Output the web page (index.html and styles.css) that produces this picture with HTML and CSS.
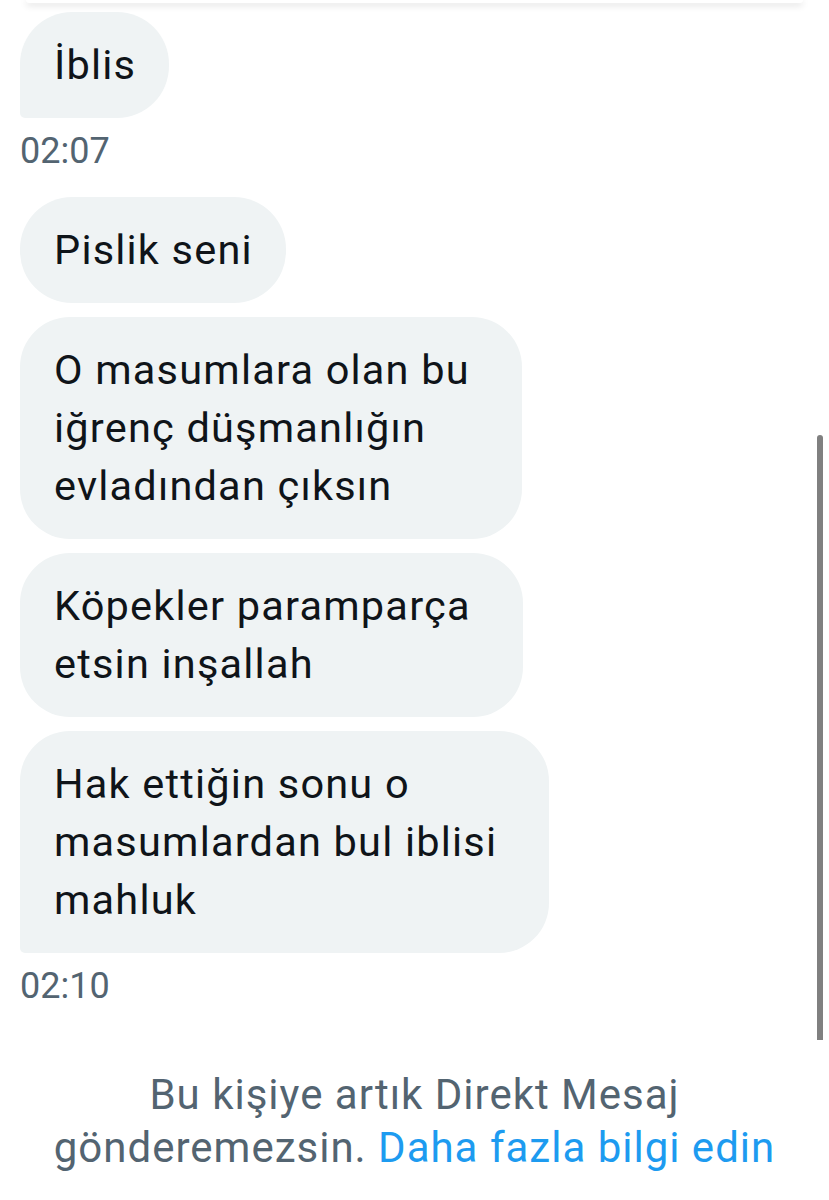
FILE: index.html
```html
<!DOCTYPE html>
<html lang="tr">
<head>
<meta charset="utf-8">
<title>Mesajlar</title>
<link rel="stylesheet" href="styles.css">
</head>
<body>
<div class="topcard"></div>
<main class="thread">
  <div class="bubble tail">İblis</div>
  <div class="time">02:07</div>
  <div class="group">
    <div class="bubble">Pislik seni</div>
    <div class="bubble multi">O masumlara olan bu<br>iğrenç düşmanlığın<br>evladından çıksın</div>
    <div class="bubble multi">Köpekler paramparça<br>etsin inşallah</div>
    <div class="bubble multi tail">Hak ettiğin sonu o<br>masumlardan bul iblisi<br>mahluk</div>
  </div>
  <div class="time">02:10</div>
</main>
<p class="notice">Bu kişiye artık Direkt Mesaj<br>gönderemezsin. <a class="link" href="#">Daha fazla bilgi edin</a></p>
<div class="scrollbar"></div>
</body>
</html>
```
FILE: styles.css
```css
html, body {
  margin: 0;
  padding: 0;
  background: #ffffff;
}
body {
  font-family: Roboto, "Liberation Sans", sans-serif;
  color: #0f1419;
  width: 829px;
  height: 1200px;
  overflow: hidden;
  position: relative;
}
.topcard {
  height: 3px;
  margin: 0 26px 0 26px;
  background: #ffffff;
  border-radius: 0 0 18px 18px;
  box-shadow: 0 2px 7px rgba(0, 0, 0, 0.18);
}
.thread {
  padding: 9px 0 0 20px;
  display: flex;
  flex-direction: column;
  align-items: flex-start;
}
.group {
  display: flex;
  flex-direction: column;
  align-items: flex-start;
  gap: 14px;
  margin-top: 25px;
}
.bubble {
  background: #eff3f4;
  font-size: 41.5px;
  letter-spacing: 1.2px;
  line-height: 58px;
  padding: 24px 33px 24px 34px;
  border-radius: 52px;
}
.bubble.multi {
  padding-right: 52px;
  border-radius: 50px;
}
.bubble.tail {
  border-bottom-left-radius: 5px;
}
.time {
  margin-top: 12px;
  font-size: 36px;
  line-height: 42px;
  color: #536471;
}
.notice {
  margin: 61px 0 0 0;
  text-align: center;
  font-size: 42px;
  letter-spacing: 1px;
  line-height: 53px;
  color: #536471;
}
.link {
  color: #1d9bf0;
  text-decoration: none;
}
.scrollbar {
  position: absolute;
  right: 6px;
  top: 435px;
  width: 6px;
  height: 605px;
  border-radius: 3px 3px 0 0;
  background: #808080;
}
```
